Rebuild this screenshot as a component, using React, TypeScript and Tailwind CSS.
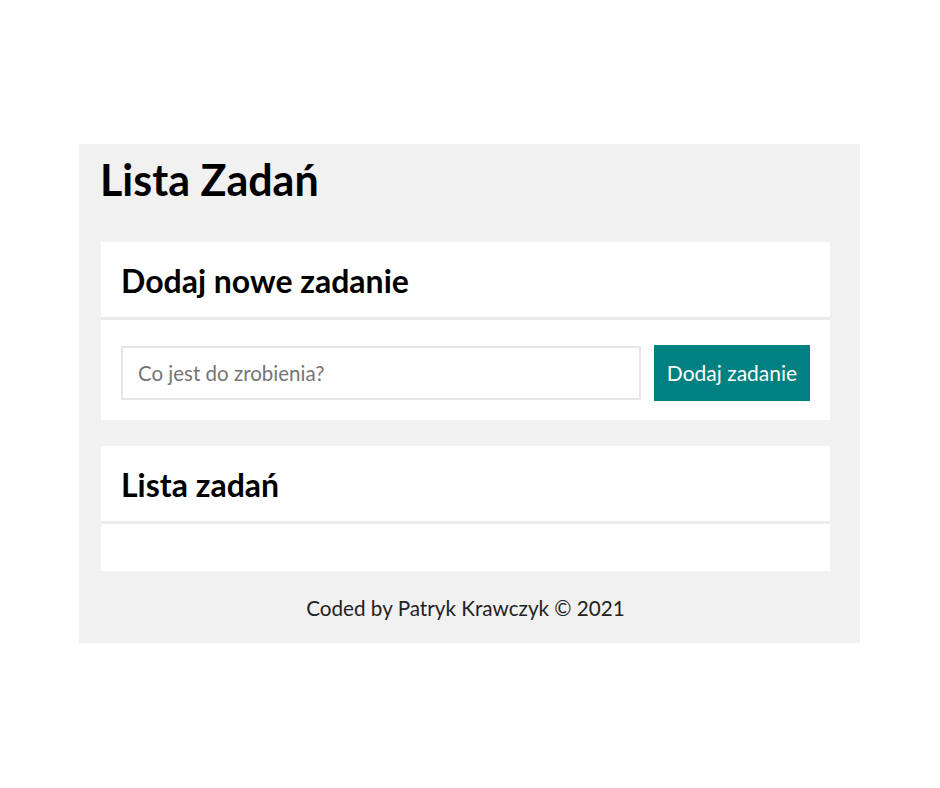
import { useState } from "react";

const App = () => {
  const [task, setTask] = useState("");

  return (
    <div className="w-[940px] h-[788px] bg-white pt-[144px] font-['Lato',sans-serif]">
      <div className="ml-[79px] w-[781px] bg-[#f1f1f1] pl-[22px] pr-[30px] pt-[6px]">
        {/* Header */}
        <h1 className="text-[43px] font-bold text-black leading-[60px] mb-[32px] -ml-px">
          Lista Zadań
        </h1>

        {/* Add task */}
        <Section title="Dodaj nowe zadanie">
          <form
            className="flex items-center gap-[13px] px-[20px] pt-[25px] pb-[19px]"
            onSubmit={(e) => e.preventDefault()}
          >
            <input
              value={task}
              onChange={(e) => setTask(e.target.value)}
              placeholder="Co jest do zrobienia?"
              className="flex-1 h-[54px] border-2 border-[#e6e6e6] px-[15px] text-[20.5px] placeholder:text-[#757575] outline-none"
            />
            <button className="w-[156px] h-[56px] bg-[#008080] text-white text-[21px]">
              Dodaj zadanie
            </button>
          </form>
        </Section>

        <div className="h-[26px]" />

        {/* Task list */}
        <Section title="Lista zadań">
          <ul className="h-[47px]"></ul>
        </Section>

        <footer className="h-[72px] flex items-center justify-center pt-[4px] text-[20.7px] text-[#222]">
          Coded by Patryk Krawczyk © 2021
        </footer>
      </div>
    </div>
  );
};

const Section = ({
  title,
  children,
}: {
  title: string;
  children: React.ReactNode;
}) => (
  <section className="bg-white">
    <h2 className="h-[78px] flex items-center px-[20px] pt-[3px] text-[32px] font-bold text-black border-b-[3px] border-[#ebebeb]">
      {title}
    </h2>
    {children}
  </section>
);

export default App;
